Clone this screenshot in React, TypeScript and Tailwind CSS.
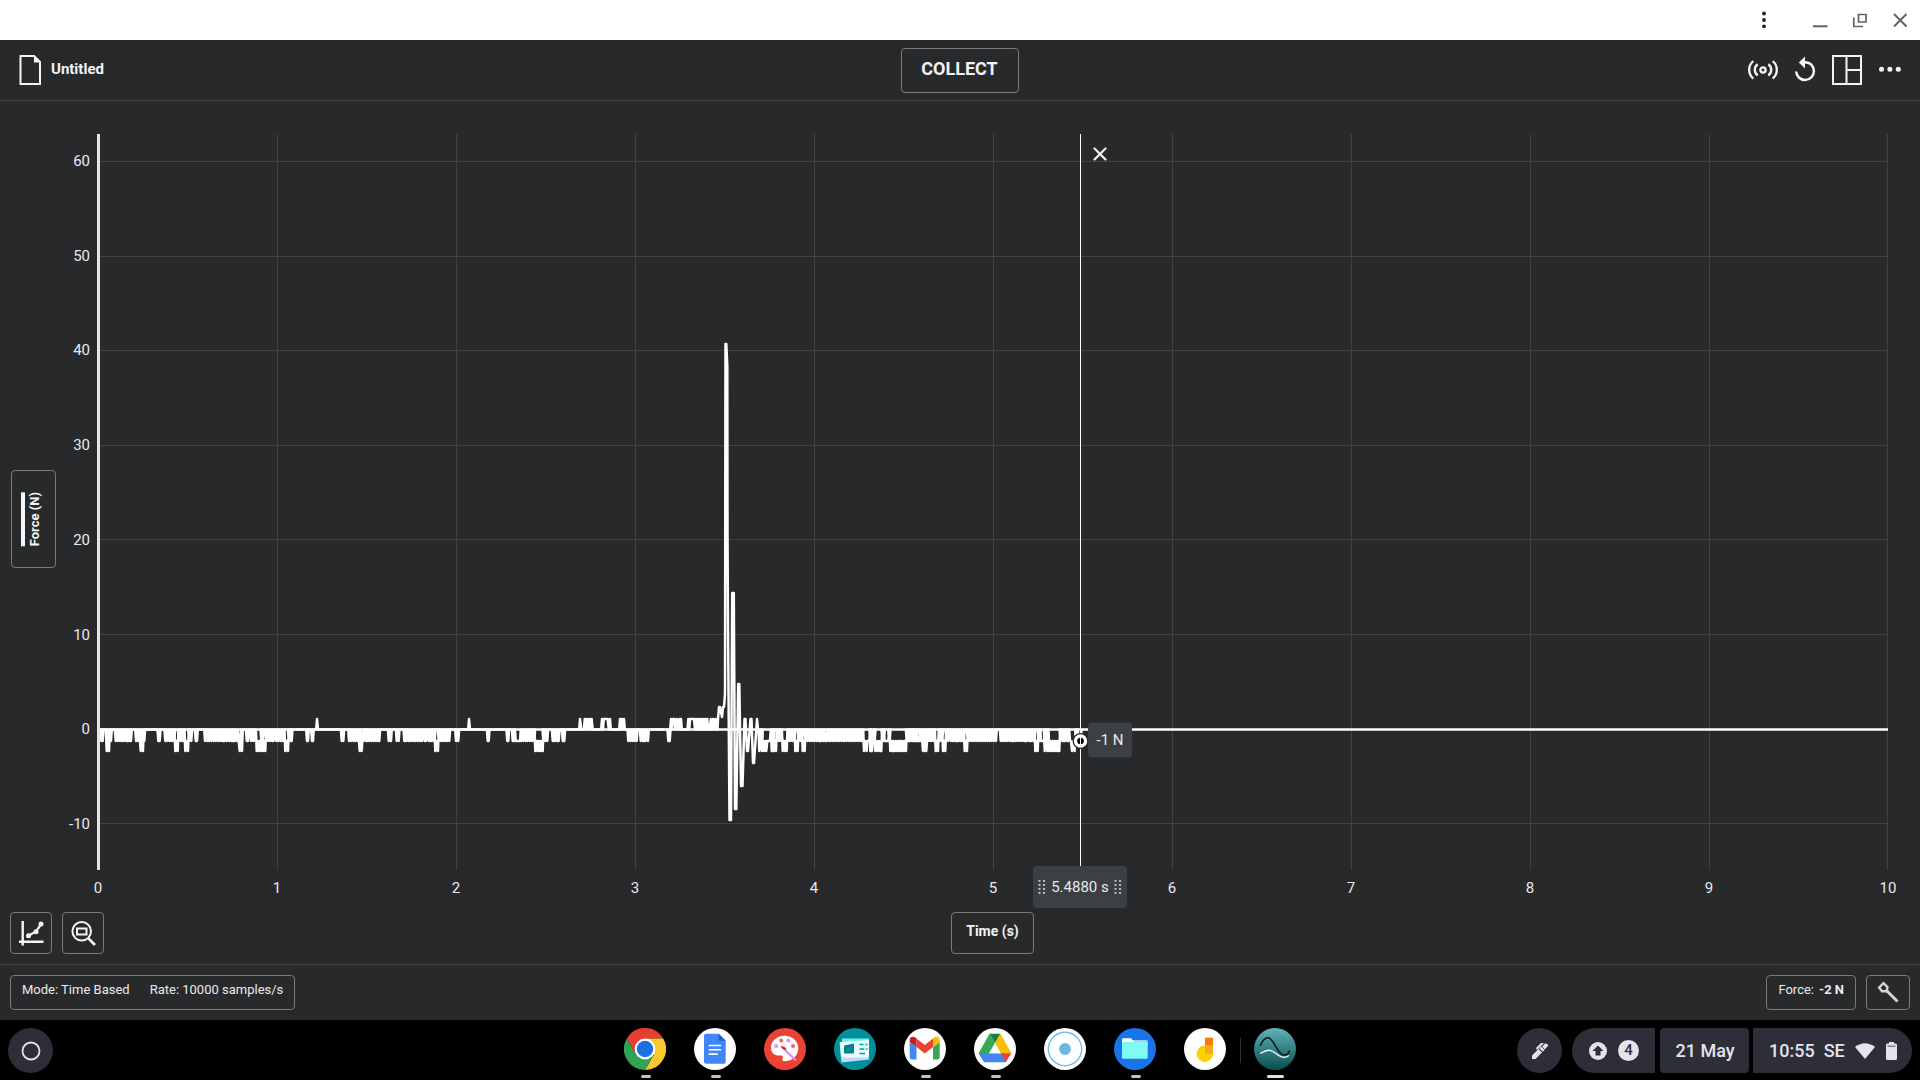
import React from "react";

type Band = [number, number, number, number];

/* Plot coordinates: 179 units per second, zero force at y = 595.5. */
const W = 1790;
const H = 736;
const LEVEL_Y: Record<string, number> = { "2": 572, "1": 585, "0": 595.5, "-1": 607, "-2": 617 };

/* Noise bands, three ticks per plot unit: [start, end, upper level, lower level]. */
const beforeImpact: Band[] = [
  [34, 38, 0, -1], [50, 57, 0, -2], [58, 63, 0, -1], [77, 90, 0, -1], [96, 102, 0, -1], [109, 113, 0, -1],
  [118, 123, 0, -1], [138, 150, 0, -1], [152, 159, 0, -2], [160, 163, 0, -1], [205, 209, 0, -1],
  [226, 253, 0, -1], [256, 263, -1, -2], [266, 282, 0, -1], [286, 294, -1, -2], [297, 304, 0, -1],
  [317, 321, 0, -1], [345, 400, 0, -1], [404, 428, 0, -1], [432, 446, 0, -1], [449, 456, 0, -2],
  [470, 474, 0, -1], [483, 496, 0, -1], [500, 512, -1, -2], [514, 518, 0, -1], [519, 526, -1, -2],
  [528, 550, 0, -1], [558, 582, 0, -1], [586, 594, -1, -2], [596, 605, 0, -1], [651, 654, 0, -1],
  [666, 669, 0, -1], [681, 684, 1, 0], [755, 760, 0, -1], [777, 783, 0, -1], [790, 807, 0, -1],
  [809, 815, 0, -2], [817, 821, 0, -1], [828, 832, 0, -1], [838, 868, 0, -1], [896, 903, 0, -1],
  [920, 926, 0, -1], [943, 948, 0, -1], [955, 996, 0, -1], [1004, 1008, 0, -1], [1016, 1034, 0, -1],
  [1036, 1044, -1, -2], [1046, 1078, 0, -1], [1098, 1105, 0, -1], [1137, 1140, 1, 0], [1193, 1196, 0, -1],
  [1252, 1255, 0, -1], [1268, 1272, 0, -1], [1277, 1280, -1, -1], [1284, 1290, -1, -1], [1294, 1333, 0, -1],
  [1336, 1358, -1, -2], [1360, 1372, 0, -1], [1388, 1406, 0, -1], [1418, 1423, 0, -1],
];
const nearImpact: Band[] = [
  [9, 12, 0, -1], [60, 64, 1, 0], [74, 84, 1, 0], [88, 98, 1, 0], [126, 129, 1, 0], [131, 140, 1, 1],
  [143, 150, 1, 0], [180, 192, 1, 0], [205, 230, 0, -1], [242, 252, 0, -1], [256, 264, 0, -1],
  [325, 329, 0, -1], [333, 339, 1, 0], [343, 350, 1, 0], [358, 363, 1, 0], [385, 388, 1, 0],
  [390, 400, 1, 1], [402, 445, 1, 0], [452, 470, 1, 0],
];
const settling: Band[] = [
  [598, 606, 0, -2], [607, 619, -1, -2], [622, 630, -1, -1], [635, 640, 0, -2], [642, 648, -1, -2],
  [652, 664, 0, -1], [668, 680, -1, -2], [684, 704, 0, -1], [706, 713, -1, -2], [716, 726, 0, -1],
  [728, 734, -1, -2], [736, 780, 0, -1], [783, 796, 0, -1], [799, 908, 0, -1],
];
const afterImpact: Band[] = [
  [252, 260, -1, -2], [262, 268, -1, -1], [271, 276, 0, -2], [278, 284, 0, -1], [286, 304, -1, -2],
  [307, 312, 0, -1], [314, 325, -1, -1], [327, 329, 0, -1], [331, 340, -1, -2], [344, 378, -1, -2],
  [380, 384, 0, -1], [386, 390, -1, -1], [392, 398, 0, -1], [400, 405, -1, -1], [407, 411, 0, -1],
  [413, 419, -1, -1], [422, 427, 0, -1], [429, 439, 0, -2], [441, 463, 0, -1], [467, 474, -1, -2],
  [478, 487, 0, -1], [489, 496, -1, -2], [499, 504, 0, -1], [512, 530, 0, -1], [534, 552, 0, -1],
  [554, 561, -1, -2], [563, 648, 0, -1], [662, 676, 0, -1], [682, 698, 0, -1], [701, 736, 0, -1],
  [740, 748, 0, -1], [753, 764, 0, -1], [766, 773, -1, -2], [776, 780, 0, -1], [783, 792, -1, -1],
  [794, 802, 0, -2], [808, 838, -1, -2], [841, 852, 0, -1], [856, 866, 0, -1], [870, 873, -1, -1],
  [876, 884, -1, -2], [888, 892, 0, -1], [896, 902, -1, -1],
];

function bandPath(bands: Band[], offset: number): string {
  const out: string[] = [];
  bands.forEach(([a, b, top, bottom], i) => {
    const x0 = (a + offset) / 3;
    const x1 = (b + offset) / 3;
    const previous = i > 0 ? bands[i - 1] : null;
    const apart = !previous || a - previous[1] > 4 || (top === 0) !== (previous[2] === 0);
    if (apart) out.push(`L${(x0 - 0.8).toFixed(1)} ${LEVEL_Y["0"]}`);
    const steps = Math.max(1, Math.round((x1 - x0) / 1.1));
    for (let s = 0; s <= steps; s++) {
      const x = (x0 + ((x1 - x0) * s) / steps).toFixed(1);
      const level = bottom < 0 ? (s % 2 ? top : bottom) : s % 2 ? bottom : top;
      out.push(`L${x} ${LEVEL_Y[String(level)]}`);
    }
    if (bottom < 0 && steps % 2) out.push(`L${x1.toFixed(1)} ${LEVEL_Y[String(bottom)]}`);
    const next = bands[i + 1];
    if (!next || next[0] - b > 4 || (next[2] === 0) !== (top === 0)) {
      out.push(`L${(x1 + 0.8).toFixed(1)} ${LEVEL_Y["0"]}`);
    }
  });
  return out.join("");
}

const impact =
  "L620 585L621 573L622 573L624 583L625 573L626 573L627 560L627.5 210L628.3 210L629.3 232L629.5 400L630 493L631.5 686L633 686L634.2 459L635.8 459L637 675L638.3 675L640.2 550L641.3 550L643 652L644.5 652L646.5 585L647.5 585L649 617L650 617L652.5 585L653.5 585L655 629L656 629L659 585L660 595.5";

const trace =
  `M0 595.5` +
  bandPath(beforeImpact, -24) +
  bandPath(nearImpact, 1386) +
  impact +
  bandPath(settling, 1386) +
  bandPath(afterImpact, 2046);

const xTicks = [0, 1, 2, 3, 4, 5, 6, 7, 8, 9, 10];
const yTicks = [60, 50, 40, 30, 20, 10, 0, -10];

function Plot() {
  return (
    <svg
      className="absolute inset-0 h-full w-full overflow-visible"
      viewBox={`0 0 ${W} ${H}`}
      preserveAspectRatio="none"
      fill="none"
      role="img"
      aria-label="Force against time"
    >
      <g stroke="#3f4244" strokeWidth="1">
        {xTicks.slice(1).map((t) => (
          <line key={t} x1={t * 179 + 0.5 - (t === 10 ? 1 : 0)} x2={t * 179 + 0.5 - (t === 10 ? 1 : 0)} y1="0" y2={H} vectorEffect="non-scaling-stroke" />
        ))}
        {yTicks.map((v, i) => (
          <line key={v} x1="0" x2={W} y1={Math.round(27 + i * 94.6) + 0.5} y2={Math.round(27 + i * 94.6) + 0.5} vectorEffect="non-scaling-stroke" />
        ))}
      </g>
      <line x1="0" x2={W} y1="595.5" y2="595.5" stroke="#fff" strokeWidth="2.5" vectorEffect="non-scaling-stroke" />
      <path d={trace} stroke="#fff" strokeWidth="2.5" strokeLinejoin="round" vectorEffect="non-scaling-stroke" />
      <line x1="0.5" x2="0.5" y1="0" y2={H} stroke="#e3e4e6" strokeWidth="3" vectorEffect="non-scaling-stroke" />
    </svg>
  );
}

function Grip() {
  return (
    <svg width="8" height="14" viewBox="0 0 8 14" fill="#c4c6c8" aria-hidden="true">
      {[1, 5, 9, 13].map((y) => (
        <g key={y}>
          <rect x="0.5" y={y - 1} width="2" height="1.8" />
          <rect x="5" y={y - 1} width="2" height="1.8" />
        </g>
      ))}
    </svg>
  );
}

function Cursor() {
  return (
    <div className="absolute top-0 -bottom-[38px] left-[54.86%] w-0">
      <div className="absolute top-0 bottom-[38px] left-0 w-px bg-white" />
      <button aria-label="Close cursor" className="absolute top-[12px] left-[12px]">
        <svg width="16" height="16" viewBox="0 0 16 16" stroke="#e9eaeb" strokeWidth="2.4" strokeLinecap="round">
          <path d="M2.5 2.5L13.5 13.5M13.5 2.5L2.5 13.5" />
        </svg>
      </button>
      <div className="absolute top-[78.3%] left-[8px] flex h-[35px] w-[44px] -translate-y-1/2 items-center justify-center rounded bg-[#3c4043] text-[15px] whitespace-nowrap text-[#e8eaed]">
        -1 N
      </div>
      <svg className="absolute top-[78.4%] -left-[8px] -translate-y-1/2" width="17" height="17" viewBox="0 0 17 17" aria-hidden="true">
        <circle cx="8.5" cy="8.5" r="8" fill="#28292b" />
        <circle cx="8.5" cy="8.5" r="5" fill="#000" stroke="#fff" strokeWidth="3.4" />
        <path d="M8.5 3.5V13.5" stroke="#fff" strokeWidth="1" />
      </svg>
      <button className="absolute bottom-0 left-0 flex h-[42px] w-[94px] -translate-x-1/2 items-center justify-center gap-[5px] rounded bg-[#3c4043] text-[15px] whitespace-nowrap text-[#e8eaed]">
        <Grip />
        5.4880 s
        <Grip />
      </button>
    </div>
  );
}

const outlined = "border border-[#77797b] rounded-[4px]";

function TitleBar() {
  return (
    <div className="flex h-[40px] shrink-0 items-center justify-end gap-4 bg-white pr-[8px] text-[#5f6368]">
      <button aria-label="Menu" className="mr-[16px]">
        <svg width="24" height="24" viewBox="0 0 24 24" fill="#202124">
          <circle cx="12" cy="5.5" r="1.9" />
          <circle cx="12" cy="12" r="1.9" />
          <circle cx="12" cy="18.3" r="1.9" />
        </svg>
      </button>
      <button aria-label="Minimise">
        <svg width="24" height="24" viewBox="0 0 24 24" fill="none" stroke="currentColor" strokeWidth="2">
          <path d="M5 18.3H19.500" />
        </svg>
      </button>
      <button aria-label="Restore">
        <svg width="24" height="24" viewBox="0 0 24 24" fill="none" stroke="currentColor" strokeWidth="1.7">
          <path d="M10.500 6.500H18V14H10.500ZM5.800 9.500V18.500H15" />
        </svg>
      </button>
      <button aria-label="Close">
        <svg width="24" height="24" viewBox="0 0 24 24" fill="none" stroke="currentColor" strokeWidth="2">
          <path d="M6 6L18.500 18.500M18.500 6L6 18.500" />
        </svg>
      </button>
    </div>
  );
}

function Header() {
  return (
    <header className="grid h-[61px] shrink-0 grid-cols-[1fr_auto_1fr] items-center border-b border-[#434648] pr-[18px] pl-[17px]">
      <button className="flex items-center gap-[10px] justify-self-start text-[15px] font-bold text-[#f1f2f3]">
        <svg width="24" height="30" viewBox="-2 0 24 30" aria-hidden="true">
          <path d="M1.500 1H15L21 7V29H1.500Z" fill="none" stroke="#f4f5f6" strokeWidth="2" />
          <path d="M15 0V7.500H22Z" fill="#f4f5f6" />
        </svg>
        <span className="pb-[2px]">Untitled</span>
      </button>
      <button className={`${outlined} flex h-[45px] w-[118px] items-center justify-center pb-[3px] text-[18px] font-bold text-[#f1f2f3]`}>
        COLLECT
      </button>
      <div className="flex items-center gap-[14px] justify-self-end text-[#f4f5f6]">
        <button aria-label="Sensors">
          <svg width="30" height="30" viewBox="0 0 30 30" fill="none" stroke="currentColor" strokeWidth="2.3">
            <circle cx="15" cy="15" r="2.6" strokeWidth="2.4" />
            <path d="M5.300 6.200C-0.200 10.500 -0.200 19 5.300 23.600M24.700 6.200C30.200 10.500 30.200 19 24.700 23.600M9.700 9.300C5.800 12 5.800 17.700 9.700 20.500M20.300 9.300C24.200 12 24.200 17.700 20.300 20.500" />
          </svg>
        </button>
        <button aria-label="Undo">
          <svg width="26" height="30" viewBox="0 0 26 30" fill="none" stroke="currentColor" strokeWidth="2.5">
            <path d="M12.500 7.300C18.700 7.300 21.900 11.500 21.900 16.200C21.900 21 18 25 13 25C8.200 25 4.300 21.200 4.200 16.500" />
            <path d="M6.800 7.600L13 1.500V13.600Z" fill="currentColor" stroke="none" />
          </svg>
        </button>
        <button aria-label="Layout">
          <svg width="30" height="30" viewBox="0 0 30 30" fill="none" stroke="currentColor" strokeWidth="2">
            <path d="M1 1H29V29H1ZM14.500 1V29M14.500 15H29" />
          </svg>
        </button>
        <button aria-label="More options">
          <svg width="26" height="30" viewBox="0 0 26 30" fill="currentColor">
            <circle cx="5.500" cy="14.300" r="2.500" />
            <circle cx="13.900" cy="14.300" r="2.500" />
            <circle cx="22.300" cy="14.300" r="2.500" />
          </svg>
        </button>
      </div>
    </header>
  );
}

function ChartPanel() {
  return (
    <section className="flex min-h-0 flex-1 flex-col pt-[33px] pb-[10px] text-[15px] text-[#e8eaed]">
      <div className="mr-[32px] grid min-h-0 flex-1 grid-cols-[98px_1fr] grid-rows-[1fr_42px]">
        <div className="flex min-h-0 pl-[11px]">
          <button className={`${outlined} mt-[34px] flex h-[98px] w-[45px] items-center justify-center self-center pr-[4px] text-[13px] font-bold text-[#f4f5f6]`}>
            <span className="rotate-180 border-r-4 border-[#f4f5f6] pr-[2px] leading-[16px] [writing-mode:vertical-rl]">Force (N)</span>
          </button>
          <div className="flex flex-1 flex-col justify-between pt-[17px] pr-2 pb-[36px] text-right leading-5">
            {yTicks.map((v) => (
              <span key={v}>{v}</span>
            ))}
          </div>
        </div>
        <div className="relative min-h-0">
          <Plot />
          <Cursor />
        </div>
        <div className="col-start-2 -mx-5 flex justify-between pt-2 leading-5">
          {xTicks.map((t) => (
            <span key={t} className="w-10 text-center">{t}</span>
          ))}
        </div>
      </div>
      <div className="grid grid-cols-[1fr_auto_1fr] pr-[32px] pl-[97px]">
        <div className="-ml-[87px] flex gap-[10px]">
          <button aria-label="Graph options" className={`${outlined} flex size-[42px] items-center justify-center`}>
            <svg width="26" height="26" viewBox="0 0 26 26" fill="none" stroke="#f4f5f6" strokeWidth="2.400">
              <path d="M4.700 1V25.500M1 21.700H25.500" />
              <path d="M10.500 15.700L18 11.500L23 4.500" strokeWidth="2.200" />
              <circle cx="10.500" cy="15.700" r="2.500" fill="#f4f5f6" stroke="none" />
              <circle cx="18" cy="11.700" r="2.500" fill="#f4f5f6" stroke="none" />
              <circle cx="23" cy="4" r="2.500" fill="#f4f5f6" stroke="none" />
            </svg>
          </button>
          <button aria-label="Zoom to fit" className={`${outlined} flex size-[42px] items-center justify-center`}>
            <svg width="26" height="26" viewBox="0 0 26 26" fill="none" stroke="#f4f5f6" strokeWidth="2">
              <circle cx="11.700" cy="11.300" r="9.300" />
              <path d="M18 18L25 25" strokeWidth="2.600" />
              <path d="M7 8.500H16.500V14.500H7Z" />
            </svg>
          </button>
        </div>
        <button className={`${outlined} h-[42px] w-[83px] pb-[3px] text-[14px] font-bold text-[#f1f2f3]`}>Time (s)</button>
      </div>
    </section>
  );
}

function Footer() {
  return (
    <footer className="flex h-[56px] shrink-0 items-center justify-between border-t border-[#434648] px-[10px] text-[13px] text-[#e8eaed]">
      <button className={`${outlined} flex h-[35px] items-center gap-[20px] px-[11px] pb-[6px]`}>
        <span>Mode: Time Based</span>
        <span>Rate: 10000 samples/s</span>
      </button>
      <div className="flex gap-[10px]">
        <button className={`${outlined} flex h-[35px] items-center gap-[5px] px-[11px] pb-[6px]`}>
          <span>Force:</span>
          <b>-2 N</b>
        </button>
        <button aria-label="Sensor setup" className={`${outlined} flex h-[35px] w-[44px] items-center justify-center pb-[2px]`}>
          <svg width="22" height="22" viewBox="0 0 22 22" fill="none" stroke="#d4d5d7" strokeWidth="2.400" aria-hidden="true">
            <path d="M6.500 2.200L2.200 6.500L5 10.200L9.500 10.200L10.500 6.200Z" />
            <path d="M9 9L20.500 20.500" strokeWidth="3" />
          </svg>
        </button>
      </div>
    </footer>
  );
}

const apps: { name: string; mark?: boolean; art: React.ReactNode }[] = [
  {
    name: "Chrome",
    mark: true,
    art: (
      <>
        <path d="M2.800 10.500A21 21 0 0 1 39.200 10.500H21L11.900 26.250Z" fill="#e63e32" />
        <path d="M39.200 10.500A21 21 0 0 1 21 42L30.100 26.250L21 10.500Z" fill="#fbc832" />
        <path d="M21 42A21 21 0 0 1 2.800 10.500L11.900 26.250H30.100Z" fill="#32a451" />
        <circle cx="21" cy="21" r="10.400" fill="#fff" />
        <circle cx="21" cy="21" r="8.200" fill="#1a70e6" />
      </>
    ),
  },
  {
    name: "Docs",
    mark: true,
    art: (
      <>
        <circle cx="21" cy="21" r="21" fill="#fff" />
        <path d="M12 5.700H24.700L31.700 12.700V34Q31.700 35.700 30 35.700H12Q10 35.700 10 34V7.500Q10 5.700 12 5.700Z" fill="#4285f4" />
        <path d="M24.700 5.700L31.700 12.700H24.700Z" fill="#1a62c9" />
        <path d="M14.700 17.500H27.200M14.700 21.800H27.200M14.700 26.100H23.700" stroke="#fff" strokeWidth="1.600" />
      </>
    ),
  },
  {
    name: "Canvas",
    art: (
      <>
        <circle cx="21" cy="21" r="21" fill="#ea4335" />
        <path d="M20.500 7.700C12 7.700 7 13.500 7 19.700C7 25 11 28 16 27.500C19 27.200 19.500 28.500 18.500 30.500C17.800 32.500 19 33.400 21.500 33.200C29 32.600 34.300 27 34.300 20.200C34.300 12.800 28 7.700 20.500 7.700Z" fill="#fff" />
        <circle cx="12.200" cy="18" r="2" fill="#e78bf0" />
        <circle cx="17.200" cy="12.500" r="2" fill="#ee675c" />
        <circle cx="24.300" cy="12.500" r="2" fill="#e78bf0" />
        <circle cx="29" cy="18" r="2" fill="#ee675c" />
        <path d="M21 22L32 32.500" stroke="#e78bf0" strokeWidth="2.200" />
        <path d="M16.500 18C19 18.300 21.500 18.500 22.500 21.500C20 23 18 21 16.500 18Z" fill="#d93025" />
      </>
    ),
  },
  {
    name: "News",
    art: (
      <>
        <circle cx="21" cy="21" r="21" fill="#00909a" />
        <path d="M5.500 14L33 26.500L35.500 31.500L7.500 34.500Z" fill="#c4d4fb" />
        <rect x="8" y="10.500" width="27" height="5" fill="#6ff0ee" />
        <path d="M6 14L35 12V28.500Q35 29.500 34 29.500H8Q7 29.500 7 28.500Z" fill="#e8fdfd" />
        <path d="M10 17.500L20 15.500V25.500H10Z" fill="#00838f" />
        <path d="M25.500 16.500H29.500M31.500 16.500H33.500M25.500 21H30.500M32 21H33.500M25.500 25.500H31" stroke="#0a9aa4" strokeWidth="1.500" />
      </>
    ),
  },
  {
    name: "Gmail",
    mark: true,
    art: (
      <>
        <circle cx="21" cy="21" r="21" fill="#fff" />
        <path d="M5.700 14L12.500 19V31.500H8Q5.700 31.500 5.700 29.500Z" fill="#4285f4" />
        <path d="M35.700 14L29 19V31.500H33.500Q35.700 31.500 35.700 29.500Z" fill="#34a853" />
        <path d="M12.500 10.500L20.800 17L29 10.500V19L20.800 25.500L12.500 19Z" fill="#ea4335" />
        <path d="M5.700 14V12C5.700 9 9.500 7.500 12.500 10.500V19Z" fill="#c5221f" />
        <path d="M35.700 14V12C35.700 9 32 7.500 29 10.500V19Z" fill="#fbbc04" />
      </>
    ),
  },
  {
    name: "Drive",
    mark: true,
    art: (
      <>
        <circle cx="21" cy="21" r="21" fill="#fff" />
        <path d="M15.500 5.700H26.500L21 15Z" fill="#188038" />
        <path d="M15.500 5.700L21 15L10.200 34.300L4.700 25.300Z" fill="#34a853" />
        <path d="M26.500 5.700L37.300 25.300H26.800L21 15Z" fill="#fbbc04" />
        <path d="M4.700 25.300H30L31.800 34.300H10.200Z" fill="#4285f4" />
        <path d="M26.800 25.300H37.300L31.800 34.300Z" fill="#ea4335" />
        <path d="M21 15L26.800 25.300H15.200Z" fill="#fff" />
      </>
    ),
  },
  {
    name: "Recorder",
    art: (
      <>
        <circle cx="21" cy="21" r="21" fill="#fff" />
        <circle cx="21" cy="21" r="16.700" fill="none" stroke="#78bbe6" strokeWidth="1.400" />
        <circle cx="21" cy="21" r="5.900" fill="#6fb6e3" />
      </>
    ),
  },
  {
    name: "Files",
    mark: true,
    art: (
      <>
        <circle cx="21" cy="21" r="21" fill="#1a73e8" />
        <path d="M19 12H32.500Q33.700 12 33.700 13.500V18H15Z" fill="#aecbfa" />
        <path d="M8 20V11.500Q8 10.300 9.200 10.300H17L20 13.500V20Z" fill="#fff" />
        <path d="M8 13.900H33.700V29.500Q33.700 30.700 32.500 30.700H9.200Q8 30.700 8 29.500Z" fill="#7ffaf4" />
      </>
    ),
  },
  {
    name: "Jamboard",
    art: (
      <>
        <circle cx="21" cy="21" r="21" fill="#fff" />
        <path d="M21 17.600A8.200 8.200 0 1 0 29 25.700V17.600Z" fill="#fdd000" />
        <rect x="21" y="9.700" width="8" height="8" fill="#f57c00" />
        <rect x="21" y="17.700" width="8" height="8" fill="#f9a825" />
      </>
    ),
  },
];

function Shelf() {
  return (
    <nav aria-label="Shelf" className="grid h-[60px] shrink-0 grid-cols-[1fr_auto_1fr] bg-black pr-2 pl-2 font-[500] text-[#e3e3ee]">
      <button aria-label="Launcher" className="mt-2 flex size-[45px] items-center justify-center rounded-full bg-[#2d2e38]">
        <svg width="22" height="22" viewBox="0 0 22 22" fill="none" stroke="#e3e3ee" strokeWidth="1.800">
          <circle cx="11" cy="11" r="8.500" />
        </svg>
      </button>
      <div className="flex gap-[28px] pt-2">
        {apps.map((app) => (
          <button key={app.name} aria-label={app.name} className="flex w-[42px] flex-col items-center gap-[5px]">
            <svg className="block" width="42" height="42" viewBox="0 0 42 42">{app.art}</svg>
            {app.mark && <span className="ml-[2px] h-[3px] w-[10px] shrink-0 rounded-full bg-[#cbb8de]" />}
          </button>
        ))}
        <button aria-label="Graphical Analysis" className="relative flex w-[42px] flex-col items-center gap-[5px]">
          <span className="absolute top-[10px] -left-[14px] h-[25px] w-px bg-[#2f3035]" />
          <svg className="block" width="42" height="42" viewBox="0 0 42 42" fill="none">
            <defs>
              <linearGradient id="sea" x1="0" x2="0" y1="0" y2="1">
                <stop offset="0" stopColor="#5fb3b8" />
                <stop offset="1" stopColor="#084f4f" />
              </linearGradient>
            </defs>
            <circle cx="21" cy="21" r="21" fill="url(#sea)" />
            <path d="M6.300 25.500C10 23.500 12 22.300 15 22.300C20.500 22.300 24 29.300 30 29.300C32 29.300 33.500 28.500 35 27.500" stroke="#eef6f6" strokeWidth="1.400" />
            <path d="M6.300 18C8 13.500 10.500 9.800 14 9.800C20 9.800 23 27 30 27C33 27 35 25.500 35.200 22.500" stroke="#15191a" strokeWidth="1.600" />
          </svg>
          <span className="h-[3px] w-[17px] shrink-0 rounded-full bg-[#e0e0ea]" />
        </button>
      </div>
      <div className="mt-2 flex h-[45px] justify-self-end text-[18px]">
        <button aria-label="Stylus tools" className="mr-[10px] flex w-[45px] items-center justify-center rounded-full bg-[#2d2e38]">
          <svg width="18" height="18" viewBox="0 0 18 18" fill="#e3e3ee">
            <path d="M1 13.500L7.500 7L11 10.500L4.500 17H1Z" />
            <path d="M8.300 6.200L10 4.500L13.500 8L11.800 9.700Z" />
            <path d="M11 4.500L14 1.500Q15 1 17 2.500Q17.500 3.500 16.500 4.500L13.500 7.500ZM5 6L10 1L13 1L6 8Z" />
          </svg>
        </button>
        <button aria-label="Notifications" className="mr-[5px] flex w-[83px] items-center gap-[11px] rounded-l-full rounded-r bg-[#2d2e38] pl-[17px]">
          <svg width="18" height="18" viewBox="0 0 18 18">
            <circle cx="9" cy="9" r="9" fill="#e3e3ee" />
            <path d="M9 3.500L14.500 9H11.500V13.500H6.500V9H3.500Z" fill="#2d2e38" />
          </svg>
          <span className="flex size-[21px] items-center justify-center rounded-full bg-[#e3e3ee] text-[15px] leading-none text-[#2d2e38]">4</span>
        </button>
        <button className="mr-[4px] w-[89px] rounded bg-[#2d2e38] pl-px">21 May</button>
        <button className="flex w-[159px] items-center rounded-l rounded-r-full bg-[#2d2e38] pl-[16px]">
          <span>10:55</span>
          <span className="ml-[9px]">SE</span>
          <svg className="ml-[10px]" width="20" height="16" viewBox="0 0 20 16" fill="#e3e3ee" aria-hidden="true">
            <path d="M0 4Q10 -3.500 20 4L10 16Z" />
          </svg>
          <svg className="ml-[11px]" width="11" height="18" viewBox="0 0 11 18" fill="#e3e3ee" aria-hidden="true">
            <path d="M3 0H8V1.500H9.500Q11 1.500 11 3V16.500Q11 18 9.500 18H1.500Q0 18 0 16.500V3Q0 1.500 1.500 1.500H3Z" />
            <path d="M1.500 4.200H9.500" stroke="#2d2e38" strokeWidth="0.800" />
          </svg>
        </button>
      </div>
    </nav>
  );
}

export default function App() {
  return (
    <div className="flex h-screen flex-col overflow-hidden bg-[#28292b] font-['Roboto',sans-serif]">
      <TitleBar />
      <Header />
      <ChartPanel />
      <Footer />
      <Shelf />
    </div>
  );
}
